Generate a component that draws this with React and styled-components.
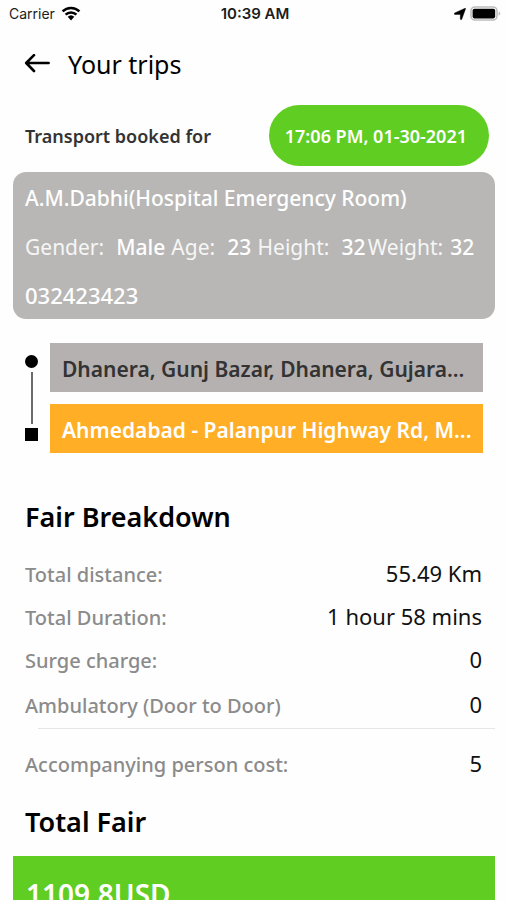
import styled, { createGlobalStyle, css } from "styled-components";

const GlobalStyle = createGlobalStyle`
    *,
    *::before,
    *::after {
        box-sizing: border-box;
        margin: 0;
        padding: 0;
    }

    body {
        background: #fefefe;
        color: #000;
        font-family: "Noto Sans", "Open Sans", sans-serif;
    }
`;

const Screen = styled.div`
    height: 100vh;
    display: flex;
    flex-direction: column;
`;

const StatusBar = styled.div`
    display: grid;
    grid-template-columns: 1fr auto 1fr;
    align-items: center;
    height: 27px;
    flex-shrink: 0;
    padding: 0 6px 0 9px;
    font-family: Inter, sans-serif;
    font-size: 14px;
    color: #1c1c1c;
`;

const StatusGroup = styled.div`
    display: flex;
    align-items: center;
    gap: ${(props) => (props.$end ? "4px" : "6px")};
    justify-content: ${(props) => (props.$end ? "flex-end" : "flex-start")};
`;

const Clock = styled.time`
    font-size: 15px;
    font-weight: 600;
`;

const Header = styled.header`
    display: flex;
    align-items: center;
    gap: 17px;
    height: 73px;
    flex-shrink: 0;
    padding: 0 24px;
`;

const BackButton = styled.button`
    display: flex;
    border: none;
    background: none;
    cursor: pointer;
`;

const Title = styled.h1`
    font-size: 25px;
    font-weight: 400;
    line-height: 32px;
`;

const Content = styled.main`
    flex: 1;
    overflow-y: auto;
    scrollbar-width: none;
    padding: 5px 12px 0 13px;
`;

const BookedRow = styled.div`
    display: flex;
    align-items: center;
    justify-content: space-between;
    padding: 0 6px 0 12px;
    margin-bottom: 6px;
`;

const BookedLabel = styled.p`
    font-size: 18px;
    font-weight: 600;
    color: #333;
`;

const BookedTime = styled.time`
    padding: 1px 22px 0 16px;
    border-radius: 31px;
    background: #60cd22;
    color: #fff;
    font-size: 18px;
    font-weight: 600;
    line-height: 60px;
`;

const PatientCard = styled.section`
    padding: 2px 12px 0;
    border-radius: 13px;
    background: #b8b7b5;
    color: #fff;
    font-size: 21px;
    font-weight: 500;
    line-height: 49px;
`;

const PatientName = styled.h2`
    font-size: 21px;
    font-weight: 500;
`;

const Phone = styled.p`
    font-size: 22px;
    line-height: 47px;
`;

const Details = styled.dl`
    display: grid;
    grid-template-columns: 146fr 86fr 110fr 115fr;
    white-space: nowrap;
`;

const Detail = styled.div`
    display: flex;
    gap: ${(props) => (props.$tight ? "7px" : "12px")};

    dt {
        font-weight: 400;
        color: #f6f6f5;
    }
`;

const Route = styled.section`
    display: flex;
    gap: 12px;
    padding: 24px 12px 0;
`;

const Track = styled.div`
    display: flex;
    flex-direction: column;
    align-items: center;
    gap: 4px;
    padding: 12px 0;
`;

const StopMark = styled.span`
    width: 13px;
    height: 13px;
    border-radius: ${(props) => (props.$round ? "50%" : "0")};
    background: #000;
`;

const TrackLine = styled.span`
    flex: 1;
    width: 2px;
    background: #6b6b6b;
`;

const Stops = styled.div`
    flex: 1;
    min-width: 0;
    display: flex;
    flex-direction: column;
    gap: 12px;
`;

const Stop = styled.p`
    padding: 4px 0 0 12px;
    background: #b5b1b0;
    color: #333;
    font-size: 21px;
    font-weight: 600;
    line-height: 45px;
    white-space: nowrap;
    overflow: hidden;
    text-overflow: ellipsis;

    ${(props) =>
        props.$destination &&
        css`
            background: #ffae26;
            color: #fff;
        `}
`;

const SectionTitle = styled.h2`
    padding: 0 12px;
    font-size: 27px;
    font-weight: 600;
    line-height: 36px;
`;

const Breakdown = styled.section`
    padding-top: 46px;
`;

const Fares = styled.dl`
    padding-top: 18px;
`;

const Fare = styled.div`
    display: flex;
    align-items: baseline;
    justify-content: space-between;
    height: 43px;
    padding: 0 13px 0 12px;
    line-height: 41px;

    dt {
        font-size: 20px;
        font-weight: 500;
        color: #8b8b8b;
    }

    dd {
        font-size: 22px;
        color: #111;
    }
`;

const Divider = styled.div`
    height: 1px;
    margin: 0 0 14px 25px;
    background: #e6e6e6;
`;

/* Extra charge that closes the trip part of the list */
const ServiceFare = styled(Fare)`
    height: 46px;
    line-height: 44px;
`;

const Total = styled.section`
    padding-top: 18px;
`;

const TotalAmount = styled.p`
    margin-top: 16px;
    padding: 20px 13px;
    background: #60cd22;
    color: #fff;
    font-size: 28px;
    font-weight: 600;
    line-height: 36px;
`;

const patient = [
    { label: "Gender:", value: "Male" },
    { label: "Age:", value: "23" },
    { label: "Height:", value: "32" },
    { label: "Weight:", value: "32", tight: true },
];

const tripFares = [
    { label: "Total distance:", value: "55.49 Km" },
    { label: "Total Duration:", value: "1 hour 58 mins" },
    { label: "Surge charge:", value: "0" },
];

function WifiIcon() {
    return (
        <svg width="20" height="15" viewBox="0 0 20 15" fill="none">
            <path
                d="M1.6 5.4a12 12 0 0 1 16.8 0M4.6 8.6a7.8 7.8 0 0 1 10.8 0"
                stroke="#000"
                strokeWidth="2.6"
            />
            <path d="M6.7 10.8a4.8 4.8 0 0 1 6.6 0L10 14.4z" fill="#000" />
        </svg>
    );
}

function LocationIcon() {
    return (
        <svg width="12" height="12" viewBox="0 0 12 12">
            <path
                d="M11.6.8 7.8 11.2c-.3.7-1.5.6-1.5-.2V6.5H1C0 6.4 0 5.2.7 4.9L11 .3c.6-.3.8.1.6.5z"
                fill="#000"
                stroke="#000"
                strokeWidth=".4"
            />
        </svg>
    );
}

function BatteryIcon() {
    return (
        <svg width="31" height="15" viewBox="0 0 31 15">
            <rect
                x="1"
                y="1"
                width="26"
                height="13"
                rx="4"
                fill="#fff"
                stroke="#bdbdbd"
                strokeWidth="1.6"
            />
            <rect x="2.6" y="2.8" width="22.6" height="9.6" rx="1.8" />
            <path d="M28.6 5.2q3.4 2.3 0 4.6z" fill="#bdbdbd" />
        </svg>
    );
}

function BackIcon() {
    return (
        <svg width="27" height="20" viewBox="0 0 27 20" fill="none">
            <path
                d="M24.6 9H2.5M10 1.2 2.2 9l7.8 8"
                stroke="#000"
                strokeWidth="2.6"
                strokeLinecap="round"
                strokeLinejoin="round"
            />
        </svg>
    );
}

export default function App() {
    return (
        <>
            <GlobalStyle />
            <Screen>
                <StatusBar>
                    <StatusGroup>
                        Carrier
                        <WifiIcon />
                    </StatusGroup>
                    <Clock>10:39 AM</Clock>
                    <StatusGroup $end>
                        <LocationIcon />
                        <BatteryIcon />
                    </StatusGroup>
                </StatusBar>

                <Header>
                    <BackButton type="button" aria-label="Back">
                        <BackIcon />
                    </BackButton>
                    <Title>Your trips</Title>
                </Header>

                <Content>
                    <BookedRow>
                        <BookedLabel>Transport booked for</BookedLabel>
                        <BookedTime>17:06 PM, 01-30-2021</BookedTime>
                    </BookedRow>

                    <PatientCard>
                        <PatientName>
                            A.M.Dabhi(Hospital Emergency Room)
                        </PatientName>
                        <Details>
                            {patient.map((item) => (
                                <Detail key={item.label} $tight={item.tight}>
                                    <dt>{item.label}</dt>
                                    <dd>{item.value}</dd>
                                </Detail>
                            ))}
                        </Details>
                        <Phone>032423423</Phone>
                    </PatientCard>

                    <Route>
                        <Track>
                            <StopMark $round />
                            <TrackLine />
                            <StopMark />
                        </Track>
                        <Stops>
                            <Stop>Dhanera, Gunj Bazar, Dhanera, Gujara...</Stop>
                            <Stop $destination>
                                Ahmedabad - Palanpur Highway Rd, M...
                            </Stop>
                        </Stops>
                    </Route>

                    <Breakdown>
                        <SectionTitle>Fair Breakdown</SectionTitle>
                        <Fares>
                            {tripFares.map((fare) => (
                                <Fare key={fare.label}>
                                    <dt>{fare.label}</dt>
                                    <dd>{fare.value}</dd>
                                </Fare>
                            ))}
                            <ServiceFare>
                                <dt>Ambulatory (Door to Door)</dt>
                                <dd>0</dd>
                            </ServiceFare>
                            <Divider />
                            <Fare>
                                <dt>Accompanying person cost:</dt>
                                <dd>5</dd>
                            </Fare>
                        </Fares>
                    </Breakdown>

                    <Total>
                        <SectionTitle>Total Fair</SectionTitle>
                        <TotalAmount>1109.8USD</TotalAmount>
                    </Total>
                </Content>
            </Screen>
        </>
    );
}
